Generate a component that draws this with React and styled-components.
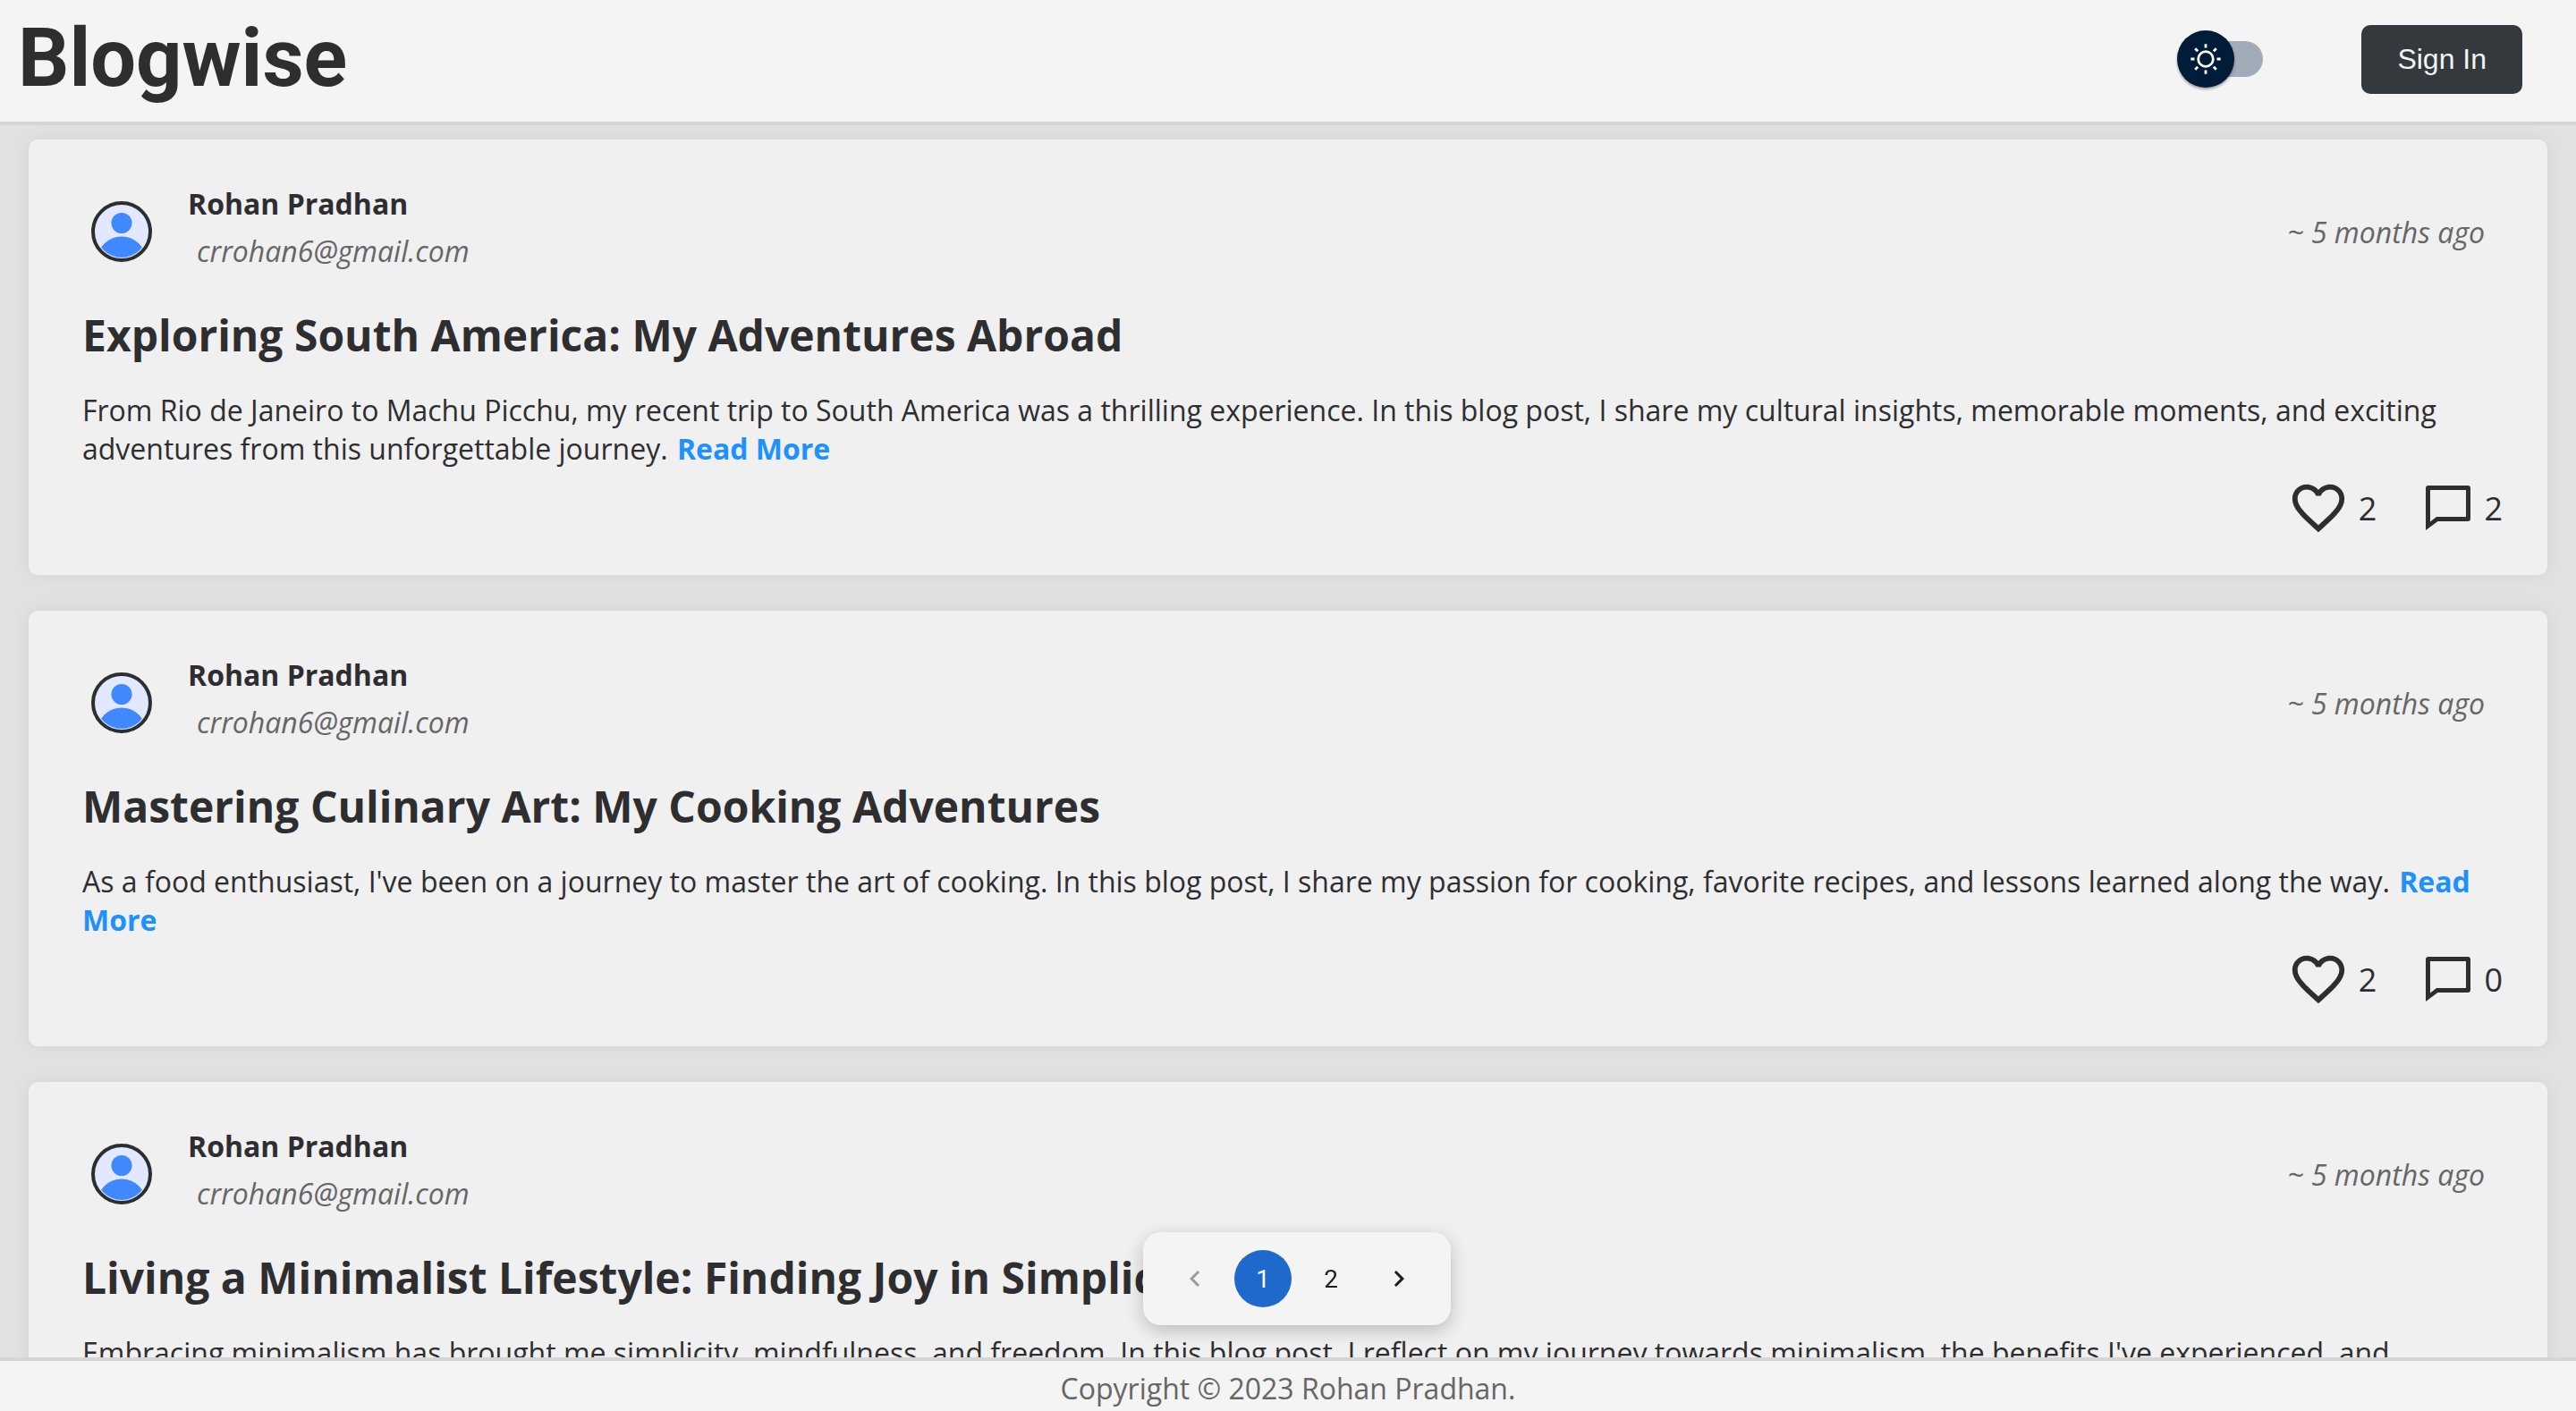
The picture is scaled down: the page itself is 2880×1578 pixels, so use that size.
import React, { useState } from "react";
import styled, { createGlobalStyle } from "styled-components";

const GlobalStyle = createGlobalStyle`
  *, *::before, *::after { box-sizing: border-box; }
  body {
    margin: 0;
    background: #e1e1e1;
    color: #2e2e30;
    font-family: "Open Sans", "Noto Sans", sans-serif;
    font-size: 32px;
    line-height: 43px;
  }
  h1, h2, p { margin: 0; }
  button { font: inherit; border: 0; padding: 0; cursor: pointer; }
`;

const Page = styled.div`
  display: flex;
  flex-direction: column;
  height: 100vh;
`;

const Header = styled.header`
  display: flex;
  flex: none;
  align-items: center;
  justify-content: space-between;
  height: 140px;
  padding: 0 60px 4px 20px;
  background: #f4f4f4;
  border-bottom: 4px solid #d5d5d5;
`;

const Brand = styled.h1`
  font-family: Roboto, sans-serif;
  font-size: 90px;
  font-weight: 700;
  line-height: 106px;
`;

const Actions = styled.div`
  display: flex;
  align-items: center;
  gap: 110px;
`;

const Switch = styled.label`
  position: relative;
  display: flex;
  align-items: center;
  width: 96px;
  height: 64px;
  cursor: pointer;
`;

const SwitchInput = styled.input`
  appearance: none;
  flex: 1;
  height: 40px;
  margin: 0 0 0 4px;
  border-radius: 20px;
  background: #a2acb8;
  cursor: pointer;
`;

const Thumb = styled.span`
  position: absolute;
  top: 0;
  left: ${(p) => (p.$on ? "32px" : "0")};
  display: flex;
  align-items: center;
  justify-content: center;
  width: 64px;
  height: 64px;
  border-radius: 50%;
  background: #001c38;
  box-shadow: 0 2px 3px rgba(0, 0, 0, 0.35);
`;

const SignIn = styled.button`
  height: 77px;
  padding: 0 40px;
  border-radius: 10px;
  background: #33393d;
  color: #f4f4f4;
  font-family: "Liberation Sans", Arial, sans-serif;
`;

const Feed = styled.main`
  display: flex;
  flex: 1;
  flex-direction: column;
  gap: 40px;
  min-height: 0;
  padding: 16px 32px;
  overflow: hidden;
`;

const Card = styled.article`
  flex: none;
  padding: 50px 50px 40px 60px;
  border-radius: 10px;
  background: #f0f0f0;
  box-shadow: 0 0 20px rgba(0, 0, 0, 0.06);
`;

const CardHead = styled.header`
  display: flex;
  align-items: center;
  padding: 0 20px 0 10px;
`;

const Avatar = styled.svg`
  flex: none;
  width: 68px;
  height: 68px;
  margin-right: 40px;
`;

const Author = styled.div`
  display: grid;
  gap: 10px;
  flex: 1;
  padding-bottom: 10px;
`;

const Name = styled.strong`
  font-weight: 700;
`;

const Email = styled.em`
  padding-left: 10px;
  color: #666;
`;

const Age = styled.time`
  color: #666;
  font-style: italic;
`;

const Title = styled.h2`
  margin-top: 30px;
  font-size: 48px;
  line-height: 65px;
  font-weight: 700;
`;

const Summary = styled.p`
  margin-top: 30px;
`;

const ReadMore = styled.a`
  margin-left: 2px;
  color: #1e90ff;
  font-weight: 700;
  text-decoration: none;
`;

const Stats = styled.div`
  display: flex;
  justify-content: flex-end;
  align-items: center;
  gap: 50px;
  height: 70px;
  margin-top: 10px;
`;

const Stat = styled.button`
  display: flex;
  align-items: center;
  gap: 10px;
  background: none;
  color: inherit;
  font-size: 36px;
`;

const StatIcon = styled.svg`
  width: ${(p) => p.$size}px;
  height: ${(p) => p.$size}px;
  fill: currentColor;
`;

const Pager = styled.nav`
  position: fixed;
  bottom: 96px;
  left: 50%;
  display: flex;
  gap: 12px;
  margin-left: -162px;
  padding: 20px 26px;
  border-radius: 20px;
  background: #f4f4f4;
  box-shadow: 0 6px 20px rgba(0, 0, 0, 0.22);
`;

const PageButton = styled.button`
  display: flex;
  align-items: center;
  justify-content: center;
  width: 64px;
  height: 64px;
  border-radius: 50%;
  background: ${(p) => (p.$active ? "#1f69cd" : "transparent")};
  color: ${(p) => (p.$active ? "#fff" : "#1e1e1e")};
  font-family: Roboto, sans-serif;
  font-size: 28px;

  &:disabled { color: #9b9b9b; cursor: default; }

  svg { width: 36px; height: 36px; fill: currentColor; }
`;

const Footer = styled.footer`
  flex: none;
  height: 60px;
  padding-top: 9px;
  border-top: 4px solid #d5d5d5;
  background: #f4f4f4;
  color: #666;
  text-align: center;
`;

const posts = [
  {
    title: "Exploring South America: My Adventures Abroad",
    text: "From Rio de Janeiro to Machu Picchu, my recent trip to South America was a thrilling experience. In this blog post, I share my cultural insights, memorable moments, and exciting adventures from this unforgettable journey.",
    likes: 2,
    comments: 2,
  },
  {
    title: "Mastering Culinary Art: My Cooking Adventures",
    text: "As a food enthusiast, I've been on a journey to master the art of cooking. In this blog post, I share my passion for cooking, favorite recipes, and lessons learned along the way.",
    likes: 2,
    comments: 0,
  },
  {
    title: "Living a Minimalist Lifestyle: Finding Joy in Simplicity",
    text: "Embracing minimalism has brought me simplicity, mindfulness, and freedom. In this blog post, I reflect on my journey towards minimalism, the benefits I've experienced, and suggestions for getting started.",
    likes: 2,
    comments: 0,
  },
];

function UserAvatar() {
  return (
    <Avatar viewBox="0 0 68 68" aria-hidden="true">
      <defs>
        <clipPath id="avatar-clip"><circle cx="34" cy="34" r="29" /></clipPath>
      </defs>
      <circle cx="34" cy="34" r="32" fill="#e1e8ff" stroke="#2e2e30" strokeWidth="4" />
      <circle cx="34" cy="24.500" r="11.500" fill="#4088ff" />
      <circle cx="34" cy="67" r="27.500" fill="#4088ff" clipPath="url(#avatar-clip)" />
    </Avatar>
  );
}

function PostCard({ post }) {
  return (
    <Card>
      <CardHead>
        <UserAvatar />
        <Author>
          <Name>Rohan Pradhan</Name>
          <Email>crrohan6@gmail.com</Email>
        </Author>
        <Age>~ 5 months ago</Age>
      </CardHead>
      <Title>{post.title}</Title>
      <Summary>
        {post.text} <ReadMore href="#read">Read More</ReadMore>
      </Summary>
      <Stats>
        <Stat type="button" aria-label="Like">
          <StatIcon $size={70} viewBox="0 0 24 24" aria-hidden="true">
            <path d="M16.5 3c-1.74 0-3.41.81-4.5 2.09C10.910 3.81 9.240 3 7.500 3 4.420 3 2 5.420 2 8.500c0 3.780 3.400 6.860 8.550 11.540L12 21.350l1.450-1.320C18.600 15.360 22 12.280 22 8.500 22 5.420 19.580 3 16.500 3zm-4.400 15.550l-.1.1-.1-.1C7.140 14.240 4 11.390 4 8.500 4 6.500 5.500 5 7.500 5c1.540 0 3.040.99 3.570 2.360h1.870C13.460 5.990 14.960 5 16.500 5c2 0 3.500 1.500 3.500 3.500 0 2.890-3.140 5.740-7.900 10.050z" />
          </StatIcon>
          {post.likes}
        </Stat>
        <Stat type="button" aria-label="Comments">
          <StatIcon $size={60} viewBox="0 0 24 24" aria-hidden="true">
            <path
              fillRule="evenodd"
              d="M3.200 2h17.600a1.200 1.200 0 0 1 1.200 1.200v13.600a1.200 1.200 0 0 1-1.200 1.200H7.400L2 22V3.200A1.200 1.200 0 0 1 3.200 2zM4 4v14.200L6.800 16H20V4z"
            />
          </StatIcon>
          {post.comments}
        </Stat>
      </Stats>
    </Card>
  );
}

export default function App() {
  const [dark, setDark] = useState(false);
  const [page, setPage] = useState(1);
  return (
    <Page>
      <GlobalStyle />
      <Header>
        <Brand>Blogwise</Brand>
        <Actions>
          <Switch>
            <SwitchInput
              type="checkbox"
              aria-label="Dark theme"
              checked={dark}
              onChange={() => setDark(!dark)}
            />
            <Thumb $on={dark}>
              <svg width="40" height="40" viewBox="0 0 20 20" fill="#fff" aria-hidden="true">
                <path d="M9.305 1.667V3.750h1.389V1.667h-1.390zm-4.707 1.950l-.982.982L5.090 6.072l.982-.982-1.473-1.473zm10.802 0L13.927 5.090l.982.982 1.473-1.473-.982-.982zM10 5.139a4.872 4.872 0 00-4.862 4.860A4.872 4.872 0 0010 14.862 4.872 4.872 0 0014.860 10 4.872 4.872 0 0010 5.139zm0 1.389A3.462 3.462 0 0113.471 10a3.462 3.462 0 01-3.473 3.472A3.462 3.462 0 016.527 10 3.462 3.462 0 0110 6.528zM1.665 9.305v1.390h2.083v-1.390H1.666zm14.583 0v1.390h2.084v-1.390h-2.084zM5.090 13.928L3.616 15.400l.982.982 1.473-1.473-.982-.982zm9.820 0l-.982.982 1.473 1.473.982-.982-1.473-1.473zM9.305 16.250v2.083h1.389V16.250h-1.390z" />
              </svg>
            </Thumb>
          </Switch>
          <SignIn type="button">Sign In</SignIn>
        </Actions>
      </Header>
      <Feed>
        {posts.map((post) => (
          <PostCard key={post.title} post={post} />
        ))}
      </Feed>
      <Pager aria-label="Pages">
        <PageButton type="button" aria-label="Previous page" disabled={page === 1} onClick={() => setPage(1)}>
          <svg viewBox="0 0 24 24"><path d="M15.410 7.410L14 6l-6 6 6 6 1.410-1.410L10.830 12z" /></svg>
        </PageButton>
        <PageButton type="button" $active={page === 1} onClick={() => setPage(1)}>1</PageButton>
        <PageButton type="button" $active={page === 2} onClick={() => setPage(2)}>2</PageButton>
        <PageButton type="button" aria-label="Next page" onClick={() => setPage(2)}>
          <svg viewBox="0 0 24 24"><path d="M10 6L8.590 7.410 13.170 12l-4.580 4.590L10 18l6-6z" /></svg>
        </PageButton>
      </Pager>
      <Footer>Copyright © 2023 Rohan Pradhan.</Footer>
    </Page>
  );
}
